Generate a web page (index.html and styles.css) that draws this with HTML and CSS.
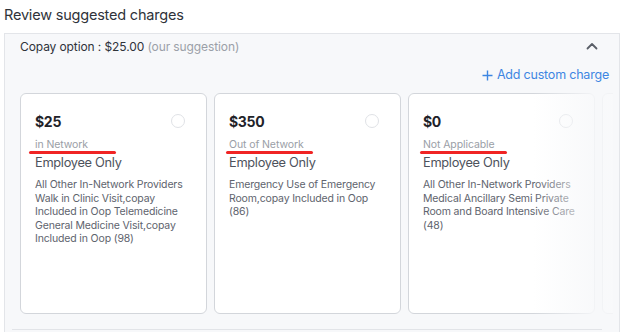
FILE: index.html
```html
<!DOCTYPE html>
<html>
<head>
<meta charset="utf-8">
<link rel="stylesheet" href="styles.css">
</head>
<body>
<div class="title">Review suggested charges</div>
<div class="panel">
  <div class="panel-head">
    <div class="head-text">Copay option : $25.00 <span class="muted">(our suggestion)</span></div>
    <svg class="chev" width="12" height="8" viewBox="0 0 12 8"><path d="M1.5 6.5 L6 2 L10.5 6.5" fill="none" stroke="#5a5f68" stroke-width="1.8" stroke-linecap="round" stroke-linejoin="round"/></svg>
  </div>
  <div class="add-row">
    <a class="add-link"><svg width="11" height="11" viewBox="0 0 11 11"><path d="M5.5 0.5 V10.5 M0.5 5.5 H10.5" stroke="#3d86e2" stroke-width="1.4"/></svg>Add custom charge</a>
  </div>
  <div class="cards-wrap">
    <div class="cards">
      <div class="card">
        <div class="card-top"><div class="price">$25</div><div class="radio"></div></div>
        <div class="net">in Network</div>
        <div class="mark m1"></div>
        <div class="who">Employee Only</div>
        <div class="desc">All Other In-Network Providers Walk in Clinic Visit,copay Included in Oop Telemedicine General Medicine Visit,copay Included in Oop (98)</div>
      </div>
      <div class="card">
        <div class="card-top"><div class="price">$350</div><div class="radio"></div></div>
        <div class="net">Out of Network</div>
        <div class="mark m2"></div>
        <div class="who">Employee Only</div>
        <div class="desc">Emergency Use of Emergency Room,copay Included in Oop (86)</div>
      </div>
      <div class="card">
        <div class="card-top"><div class="price">$0</div><div class="radio"></div></div>
        <div class="net">Not Applicable</div>
        <div class="mark m2"></div>
        <div class="who">Employee Only</div>
        <div class="desc">All Other In-Network Providers Medical Ancillary Semi Private Room and Board Intensive Care (48)</div>
      </div>
      <div class="card"></div>
    </div>
    <div class="fade"></div>
  </div>
  <div class="divider"></div>
</div>
</body>
</html>
```

FILE: styles.css
```css
* { box-sizing: border-box; }
body {
  margin: 0;
  font-family: Inter, "Noto Sans", sans-serif;
  background: #fff;
  color: #2b2f36;
}
.title {
  font-size: 14.5px;
  line-height: 20px;
  padding: 5px 0 0 4px;
  color: #2f333a;
  letter-spacing: -0.2px;
}
.panel {
  margin: 8px 0 0 4px;
  width: 616px;
  height: 299px;
  border: 1px solid #e3e5e9;
  border-bottom: none;
  background: #f7f8fa;
  overflow: hidden;
}
.panel-head {
  display: flex;
  align-items: center;
  justify-content: space-between;
  padding: 4px 21px 0 15px;
}
.head-text {
  font-size: 12px;
  line-height: 18px;
  color: #2f333a;
  letter-spacing: -0.1px;
}
.muted { color: #9ba0a8; }
.chev { margin-top: -2px; }
.add-row {
  display: flex;
  justify-content: flex-end;
  padding: 10px 10px 0 0;
}
.add-link {
  display: flex;
  align-items: center;
  gap: 4px;
  font-size: 12.5px;
  line-height: 18px;
  color: #3d86e2;
  letter-spacing: -0.2px;
}
.cards-wrap {
  position: relative;
  margin: 9px 0 0 15px;
  width: 593px;
  overflow: hidden;
}
.cards {
  display: flex;
  gap: 7px;
}
.card {
  flex: 0 0 187px;
  height: 221px;
  background: #fff;
  border: 1px solid #d3d6db;
  border-radius: 6px;
  padding: 17px 21px 0 14px;
}
.card-top {
  display: flex;
  justify-content: space-between;
  align-items: center;
  height: 20px;
}
.price {
  font-size: 14px;
  font-weight: 700;
  color: #1f2329;
  letter-spacing: -0.3px;
}
.radio {
  width: 14px;
  height: 14px;
  border: 1.5px solid #e0e2e6;
  border-radius: 50%;
}
.net {
  margin-top: 7px;
  font-size: 10.5px;
  line-height: 14px;
  color: #9a9ea6;
  letter-spacing: -0.1px;
}
.mark {
  width: 87px;
  height: 3px;
  background: #f02424;
  border-radius: 2px;
  margin-top: -1px;
}
.m1 { margin-left: -6px; }
.m2 { margin-left: -3px; }
.who {
  font-size: 12.8px;
  line-height: 18px;
  color: #4d525c;
  letter-spacing: -0.3px;
}
.desc {
  margin-top: 6px;
  margin-right: -7px;
  font-size: 10.5px;
  line-height: 13.5px;
  color: #5e636d;
  letter-spacing: -0.15px;
}
.fade {
  position: absolute;
  top: 0;
  right: 0;
  width: 80px;
  height: 100%;
  background: linear-gradient(to right, rgba(247,248,250,0), rgba(247,248,250,0.85) 75%);
}
.divider {
  margin: 15px 0 0 7px;
  width: 590px;
  height: 1px;
  background: #e2e4e8;
}
```
